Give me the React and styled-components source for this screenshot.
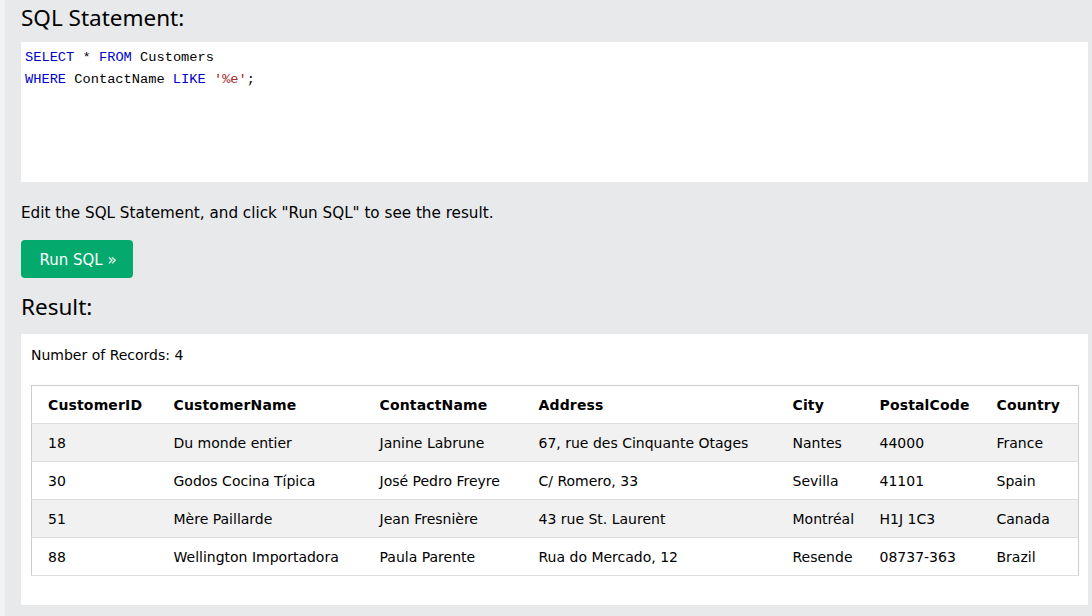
import React from 'react';
import styled, {createGlobalStyle} from 'styled-components';

const GlobalStyle = createGlobalStyle`
  html, body {
    margin: 0;
    padding: 0;
    background: #f3f3f3;
  }
  body {
    font-family: Verdana, "DejaVu Sans", sans-serif;
    font-size: 15px;
    color: #000;
  }
`;

const Page = styled.div`
  margin-left: 5px;
  padding: 0 4px 40px 16px;
  background: #e7e9eb;
  min-height: 640px;
`;

const Heading = styled.h3`
  margin: 0;
  padding: 2px 0 0;
  height: ${p => p.$height || 42}px;
  box-sizing: border-box;
  font-family: "Noto Sans", "Open Sans", sans-serif;
  font-weight: 400;
  font-size: 22.5px;
  line-height: 32px;
  color: #000;
`;

const CodeBox = styled.div`
  background: #fff;
  height: 140px;
  padding: 5px 4px;
  box-sizing: border-box;
  font-family: "Liberation Mono", "DejaVu Sans Mono", monospace;
  font-size: 13.7px;
  line-height: 22px;
`;

const Kw = styled.span`
  color: #0000cd;
`;

const Str = styled.span`
  color: #a52a2a;
`;

const Hint = styled.p`
  margin: 0;
  padding: 20px 0 0;
  height: 38px;
  font-size: 15.2px;
  line-height: 22px;
`;

const RunButton = styled.button`
  display: block;
  width: 112px;
  height: 38px;
  padding: 0 0 0 2px;
  border: none;
  border-radius: 4px;
  background: #04aa6d;
  color: #fff;
  font-family: Verdana, "DejaVu Sans", sans-serif;
  font-size: 15px;
  line-height: 40px;
  cursor: pointer;
  margin-bottom: 11px;
`;

const ResultBox = styled.div`
  background: #fff;
  padding: 10px 10px 29px;
`;

const Count = styled.div`
  font-size: 14px;
  line-height: 22px;
  margin-bottom: 19px;
`;

const Table = styled.table`
  width: 100%;
  border-collapse: collapse;
  table-layout: fixed;
  border: 1px solid #ccc;
  font-size: 14px;
`;

const Row = styled.tr`
  background: ${p => (p.$shade ? '#f1f1f1' : '#fff')};
  border-bottom: 1px solid #ddd;
`;

const Th = styled.th`
  text-align: left;
  font-weight: 700;
  height: 37px;
  padding: 0 8px;
  letter-spacing: 0.15px;
  &:first-child {
    padding-left: 16px;
  }
`;

const Td = styled.td`
  height: 37px;
  padding: 0 8px;
  white-space: nowrap;
  &:first-child {
    padding-left: 16px;
  }
`;

const columns = [
  {name: 'CustomerID', width: 134},
  {name: 'CustomerName', width: 206},
  {name: 'ContactName', width: 159},
  {name: 'Address', width: 254},
  {name: 'City', width: 87},
  {name: 'PostalCode', width: 117},
  {name: 'Country', width: 90},
];

const rows = [
  ['18', 'Du monde entier', 'Janine Labrune', '67, rue des Cinquante Otages', 'Nantes', '44000', 'France'],
  ['30', 'Godos Cocina Típica', 'José Pedro Freyre', 'C/ Romero, 33', 'Sevilla', '41101', 'Spain'],
  ['51', 'Mère Paillarde', 'Jean Fresnière', '43 rue St. Laurent', 'Montréal', 'H1J 1C3', 'Canada'],
  ['88', 'Wellington Importadora', 'Paula Parente', 'Rua do Mercado, 12', 'Resende', '08737-363', 'Brazil'],
];

const App = () => {
  return (
    <>
      <GlobalStyle />
      <Page>
        <Heading>SQL Statement:</Heading>
        <CodeBox>
          <div>
            <Kw>SELECT</Kw> * <Kw>FROM</Kw> Customers
          </div>
          <div>
            <Kw>WHERE</Kw> ContactName <Kw>LIKE</Kw> <Str>'%e'</Str>;
          </div>
        </CodeBox>
        <Hint>Edit the SQL Statement, and click "Run SQL" to see the result.</Hint>
        <RunButton>Run SQL »</RunButton>
        <Heading $height={45}>Result:</Heading>
        <ResultBox>
          <Count>Number of Records: 4</Count>
          <Table>
            <colgroup>
              {columns.map(c => (
                <col key={c.name} style={{width: c.width}} />
              ))}
            </colgroup>
            <thead>
              <Row>
                {columns.map(c => (
                  <Th key={c.name}>{c.name}</Th>
                ))}
              </Row>
            </thead>
            <tbody>
              {rows.map((r, i) => (
                <Row key={r[0]} $shade={i % 2 === 0}>
                  {r.map((v, j) => (
                    <Td key={j}>{v}</Td>
                  ))}
                </Row>
              ))}
            </tbody>
          </Table>
        </ResultBox>
      </Page>
    </>
  );
};

export default App;
